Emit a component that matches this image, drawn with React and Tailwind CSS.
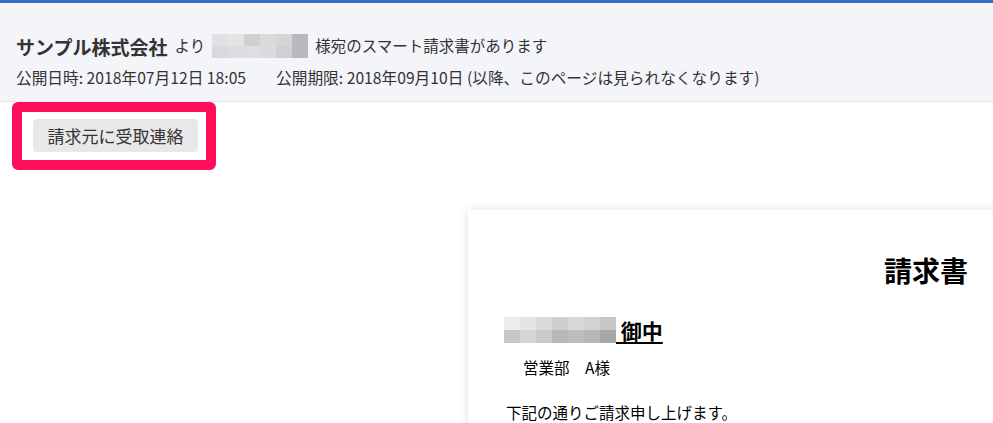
const FONT = "font-['Noto_Sans_CJK_JP',sans-serif]";

const headerMosaic = [
  ['#e1e1e3', '#e4e4e6', '#d0d0d2', '#dadadc', '#d5d5d7', '#b8b9bd'],
  ['#d9d9db', '#dddddf', '#dedee0', '#dbdbdd', '#d0d0d2', '#b8b9bd'],
];

const nameMosaic = [
  ['#ececec', '#e4e4e4', '#dadada', '#cfcfcf', '#d8d8d8', '#d2d2d2', '#c6c6c6'],
  ['#c6c6c6', '#d6d6d6', '#c9c9c9', '#b8b8b8', '#bdbdbd', '#b6b6b6', '#a7a7a7'],
];

const Mosaic = ({ rows, cell, rowH }) => (
  <div className="flex flex-col">
    {rows.map((row, i) => (
      <div key={i} className="flex">
        {row.map((c, j) => (
          <div key={j} style={{ background: c, width: cell, height: rowH }} />
        ))}
      </div>
    ))}
  </div>
);

export default function App() {
  return (
    <div className={`${FONT} w-[993px] h-[423px] overflow-hidden bg-white`}>
      {/* 上部ヘッダー */}
      <div className="border-t-[3px] border-[#3a6fc4] bg-[#f4f5f9] border-b border-b-[#e3e5ea] pl-[16px] pt-[31px] pb-[13px] text-[#333]">
        <div className="flex items-center h-[24px]">
          <span className="text-[19px] font-bold leading-none">サンプル株式会社</span>
          <span className="text-[15.5px] ml-[7px] mr-[7px] leading-none">より</span>
          <Mosaic rows={headerMosaic} cell={16} rowH={12} />
          <span className="text-[15.5px] ml-[7px] leading-none">様宛のスマート請求書があります</span>
        </div>
        <div className="flex items-center h-[20px] mt-[10px] text-[15.7px]">
          <span>公開日時: 2018年07月12日 18:05</span>
          <span className="ml-[30px]">公開期限: 2018年09月10日 (以降、このページは見られなくなります)</span>
        </div>
      </div>

      {/* 受取連絡ボタン */}
      <div className="ml-[12px] w-[204px] border-[10px] border-[#ff0f5a] rounded-[6px] pl-[11px] pr-[8px] pt-[7px] pb-[8px]">
        <button className="w-[165px] h-[33px] bg-[#e8e8e8] rounded-[4px] text-[17px] text-[#333] flex items-center justify-center">
          請求元に受取連絡
        </button>
      </div>

      {/* 請求書プレビュー */}
      <div className="ml-[468px] mt-[40px] w-[530px] h-[260px] bg-white shadow-[0_0_10px_rgba(0,0,0,0.12)] text-black">
        <div className="pt-[42px] pr-[30px] text-right text-[28px] font-bold leading-[36px]">請求書</div>
        <div className="pl-[36px] mt-[29px] flex items-end">
          <Mosaic rows={nameMosaic} cell={16} rowH={13} />
          <span className="text-[21px] font-bold leading-[26px] underline underline-offset-[3px] decoration-2">&nbsp;御中</span>
        </div>
        <div className="pl-[55px] mt-[14px] text-[15.5px] leading-[20px]">営業部　A様</div>
        <div className="pl-[38px] mt-[25px] text-[15.5px] leading-[20px]">下記の通りご請求申し上げます。</div>
      </div>
    </div>
  );
}
